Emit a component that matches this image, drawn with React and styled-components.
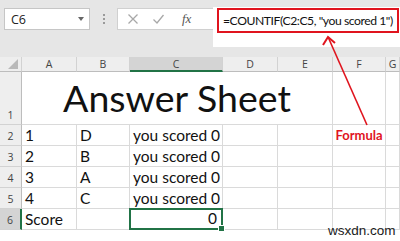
import React from "react";
import styled, { createGlobalStyle } from "styled-components";

const Global = createGlobalStyle`
  html, body { margin: 0; padding: 0; background: #ffffff; }
  body { width: 400px; height: 241px; overflow: hidden; font-family: Lato, "Open Sans", sans-serif; }
`;

const Page = styled.div`
  position: relative;
  width: 400px;
  height: 241px;
  overflow: hidden;
  background: #ffffff;
`;

const Toolbar = styled.div`
  height: 57px;
  background: #e6e6e6;
  display: flex;
  align-items: flex-start;
  box-sizing: border-box;
  padding-top: 8px;
  padding-left: 4px;
  & > * { flex-shrink: 0; }
`;

const NameBox = styled.div`
  width: 86px;
  height: 22px;
  box-sizing: border-box;
  background: #fff;
  border: 1px solid #c6c6c6;
  display: flex;
  align-items: center;
  justify-content: space-between;
  padding: 0 5px 0 6px;
  font-family: "Open Sans", "Liberation Sans", sans-serif;
  font-size: 12.5px;
  color: #222;
`;

const Caret = styled.span`
  width: 0;
  height: 0;
  border-left: 3.5px solid transparent;
  border-right: 3.5px solid transparent;
  border-top: 4px solid #666;
`;

const Dots = styled.div`
  width: 27px;
  height: 22px;
  display: flex;
  flex-direction: column;
  align-items: center;
  justify-content: center;
  gap: 2px;
  span {
    width: 2px;
    height: 2px;
    background: #9a9a9a;
  }
`;

const FxBox = styled.div`
  width: 96px;
  height: 22px;
  box-sizing: border-box;
  background: #fff;
  border: 1px solid #d0d0d0;
  border-right: none;
  display: flex;
  align-items: center;
  padding-left: 9px;
  gap: 13px;
`;

const Fx = styled.span`
  font-family: "Liberation Serif", "DejaVu Serif", serif;
  font-style: italic;
  font-size: 13px;
  color: #555;
  margin-left: 4px;
`;

const FormulaInput = styled.div`
  flex: 1 1 auto;
  min-width: 0;
  height: 40px;
  margin-top: -1px;
  background: #fff;
  box-sizing: border-box;
  padding: 1px 1px 0 4px;
`;

const RedBox = styled.div`
  height: 25px;
  box-sizing: border-box;
  border: 2px solid #e0141e;
  display: flex;
  align-items: center;
  padding-left: 4px;
  font-family: Lato, "Open Sans", sans-serif;
  font-size: 12.2px;
  letter-spacing: -0.45px;
  color: #111;
  white-space: nowrap;
  overflow: hidden;
`;

const Sheet = styled.div`
  display: grid;
  grid-template-columns: 22px 55px 53px 93px 55px 55px 53px 1fr;
  grid-template-rows: 15px 53px repeat(6, 21px);
`;

const Head = styled.div`
  box-sizing: border-box;
  background: ${(p) => (p.$sel ? "#d4d4d4" : "#eeeeee")};
  border-right: 1px solid #d2d2d2;
  border-bottom: ${(p) => (p.$sel ? "2px solid #217346" : "1px solid #bdbdbd")};
  display: flex;
  align-items: center;
  justify-content: center;
  font-family: "Open Sans", "Liberation Sans", sans-serif;
  font-size: 10.5px;
  color: #444;
  position: relative;
`;

const Corner = styled(Head)`
  &::after {
    content: "";
    position: absolute;
    right: 3px;
    bottom: 2px;
    width: 0;
    height: 0;
    border-left: 10px solid transparent;
    border-bottom: 10px solid #b9b9b9;
  }
`;

const RowHead = styled.div`
  box-sizing: border-box;
  background: ${(p) => (p.$sel ? "#d4d4d4" : "#eeeeee")};
  border-right: ${(p) => (p.$sel ? "2px solid #217346" : "1px solid #bdbdbd")};
  border-bottom: 1px solid #d2d2d2;
  display: flex;
  align-items: flex-end;
  justify-content: center;
  padding-bottom: 2px;
  font-family: "Open Sans", "Liberation Sans", sans-serif;
  font-size: 10.5px;
  color: #444;
`;

const Cell = styled.div`
  box-sizing: border-box;
  border-right: 1px solid #dadada;
  border-bottom: 1px solid #dadada;
  grid-column: ${(p) => p.$span || "auto"};
  display: flex;
  align-items: flex-end;
  justify-content: ${(p) => (p.$align === "right" ? "flex-end" : p.$align === "center" ? "center" : "flex-start")};
  padding: 0 3px 0 3px;
  font-family: Lato, "Open Sans", sans-serif;
  font-size: 15.5px;
  line-height: 19px;
  color: #111;
  white-space: nowrap;
`;

const TitleCell = styled(Cell)`
  font-size: 37.5px;
  line-height: 48px;
  padding-bottom: 2px;
`;

const LabelCell = styled(Cell)`
  color: #e0141e;
  font-weight: 700;
  font-size: 13px;
  line-height: 17px;
  padding-bottom: 1px;
`;

const SelCell = styled(Cell)`
  position: relative;
  border: 2px solid #217346;
  margin: -1px 0 0 -1px;
  padding-right: 4px;
  &::after {
    content: "";
    position: absolute;
    right: -4px;
    bottom: -4px;
    width: 5px;
    height: 5px;
    background: #217346;
    border: 1px solid #fff;
  }
`;

const Overlay = styled.svg`
  position: absolute;
  left: 0;
  top: 0;
  pointer-events: none;
`;

const Watermark = styled.div`
  position: absolute;
  left: 328px;
  top: 223px;
  font-family: "Liberation Sans", Arial, sans-serif;
  font-size: 13.5px;
  color: #1a1a1a;
`;

const cols = ["A", "B", "C", "D", "E", "F", "G"];
const rows = [
  ["1", "D", "you scored 0"],
  ["2", "B", "you scored 0"],
  ["3", "A", "you scored 0"],
  ["4", "C", "you scored 0"],
];

function XIcon() {
  return (
    <svg width="12" height="12" viewBox="0 0 12 12">
      <path d="M1.5 1.5 L10.5 10.5 M10.5 1.5 L1.5 10.5" stroke="#a8a8a8" strokeWidth="1.3" fill="none" />
    </svg>
  );
}
function CheckIcon() {
  return (
    <svg width="13" height="12" viewBox="0 0 13 12">
      <path d="M1.5 6.5 L5 10 L11.5 2" stroke="#a8a8a8" strokeWidth="1.3" fill="none" />
    </svg>
  );
}

export default function App() {
  return (
    <Page>
      <Global />
      <Toolbar>
        <NameBox>
          C6
          <Caret />
        </NameBox>
        <Dots>
          <span />
          <span />
          <span />
        </Dots>
        <FxBox>
          <XIcon />
          <CheckIcon />
          <Fx>fx</Fx>
        </FxBox>
        <FormulaInput>
          <RedBox>=COUNTIF(C2:C5, "you scored 1")</RedBox>
        </FormulaInput>
      </Toolbar>
      <Sheet>
        <Corner />
        {cols.map((c) => (
          <Head key={c} $sel={c === "C"}>
            {c}
          </Head>
        ))}
        <RowHead>1</RowHead>
        <TitleCell $span="span 5" $align="center">Answer Sheet</TitleCell>
        <Cell />
        <Cell />
        {rows.map((r, i) => (
          <React.Fragment key={i}>
            <RowHead>{i + 2}</RowHead>
            <Cell>{r[0]}</Cell>
            <Cell>{r[1]}</Cell>
            <Cell>{r[2]}</Cell>
            <Cell />
            <Cell />
            {i === 0 ? <LabelCell $align="center">Formula</LabelCell> : <Cell />}
            <Cell />
          </React.Fragment>
        ))}
        <RowHead $sel>6</RowHead>
        <Cell>Score</Cell>
        <Cell />
        <SelCell $align="right">0</SelCell>
        <Cell />
        <Cell />
        <Cell />
        <Cell />
      </Sheet>
      <Overlay width="400" height="241" viewBox="0 0 400 241">
        <line x1="367" y1="125" x2="328.5" y2="38" stroke="#e0141e" strokeWidth="1.6" />
        <path d="M323 45 L328 37 L335 43" stroke="#e0141e" strokeWidth="2" fill="none" />
      </Overlay>
      <Watermark>wsxdn.com</Watermark>
    </Page>
  );
}
